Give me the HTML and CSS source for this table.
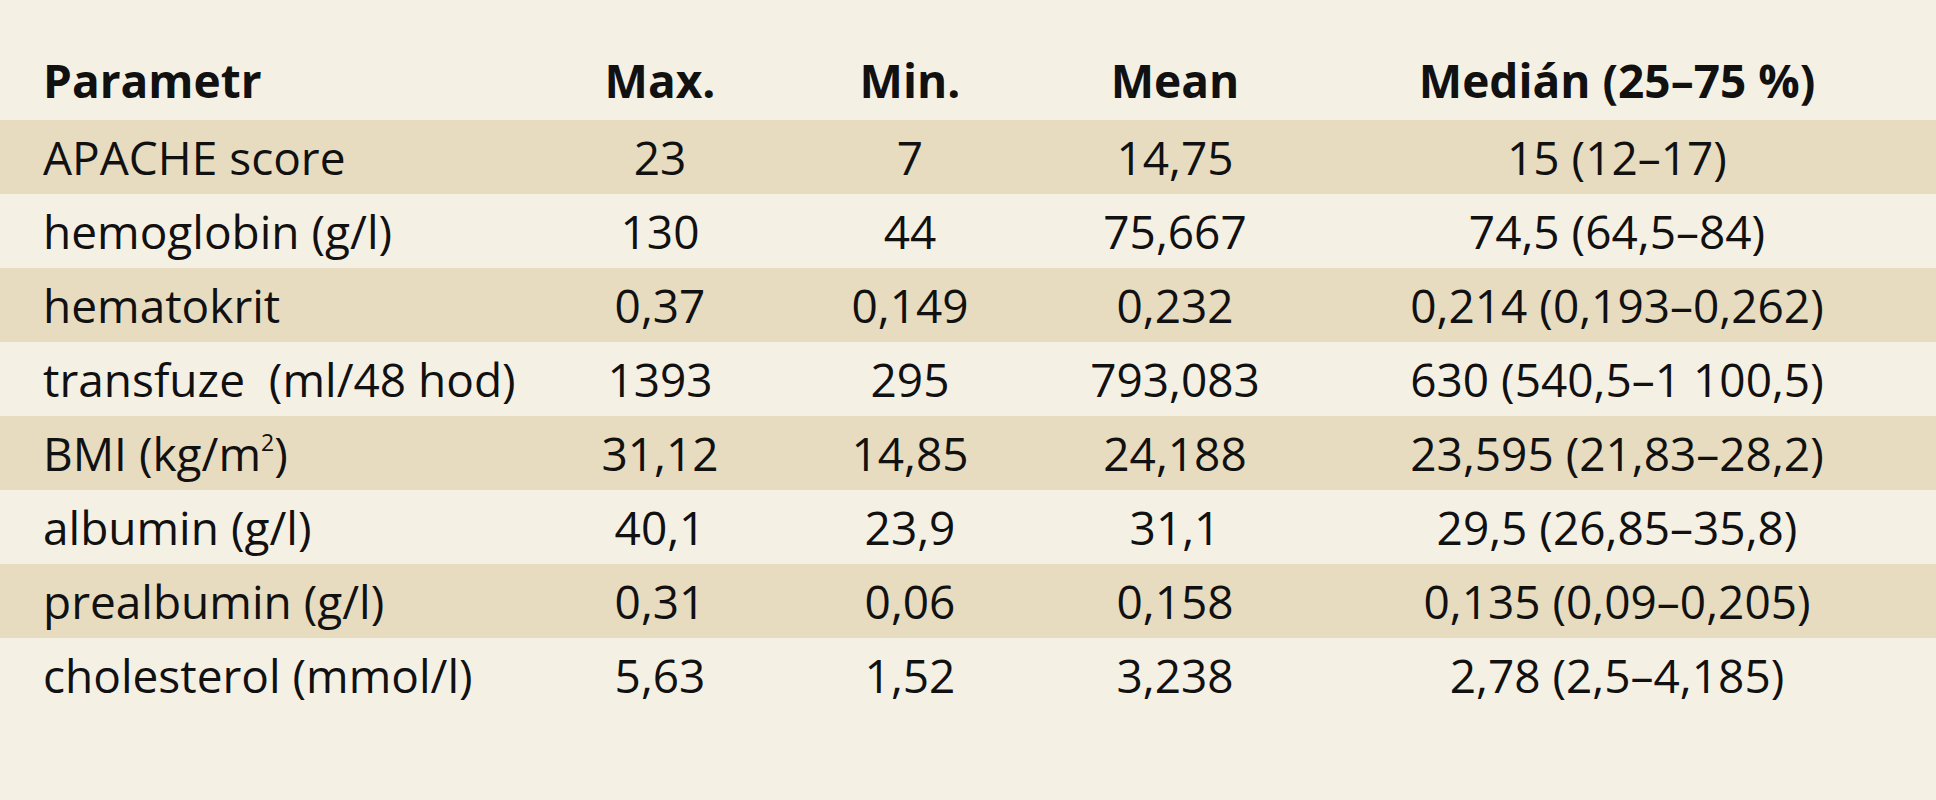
FILE: index.html
```html
<!DOCTYPE html>
<html lang="cs">
<head>
<meta charset="utf-8">
<link rel="stylesheet" href="styles.css">
</head>
<body>
<div class="table">
  <div class="row head">
    <div class="c first">Parametr</div>
    <div class="c">Max.</div>
    <div class="c">Min.</div>
    <div class="c">Mean</div>
    <div class="c">Medián (25–75 %)</div>
  </div>
  <div class="row band">
    <div class="c first">APACHE score</div>
    <div class="c">23</div><div class="c">7</div><div class="c">14,75</div><div class="c">15 (12–17)</div>
  </div>
  <div class="row">
    <div class="c first">hemoglobin (g/l)</div>
    <div class="c">130</div><div class="c">44</div><div class="c">75,667</div><div class="c">74,5 (64,5–84)</div>
  </div>
  <div class="row band">
    <div class="c first">hematokrit</div>
    <div class="c">0,37</div><div class="c">0,149</div><div class="c">0,232</div><div class="c">0,214 (0,193–0,262)</div>
  </div>
  <div class="row">
    <div class="c first">transfuze&nbsp; (ml/48 hod)</div>
    <div class="c">1393</div><div class="c">295</div><div class="c">793,083</div><div class="c">630 (540,5–1 100,5)</div>
  </div>
  <div class="row band">
    <div class="c first">BMI (kg/m<sup>2</sup>)</div>
    <div class="c">31,12</div><div class="c">14,85</div><div class="c">24,188</div><div class="c">23,595 (21,83–28,2)</div>
  </div>
  <div class="row">
    <div class="c first">albumin (g/l)</div>
    <div class="c">40,1</div><div class="c">23,9</div><div class="c">31,1</div><div class="c">29,5 (26,85–35,8)</div>
  </div>
  <div class="row band">
    <div class="c first">prealbumin (g/l)</div>
    <div class="c">0,31</div><div class="c">0,06</div><div class="c">0,158</div><div class="c">0,135 (0,09–0,205)</div>
  </div>
  <div class="row">
    <div class="c first">cholesterol (mmol/l)</div>
    <div class="c">5,63</div><div class="c">1,52</div><div class="c">3,238</div><div class="c">2,78 (2,5–4,185)</div>
  </div>
</div>
</body>
</html>
```
FILE: styles.css
```css
html, body {
  margin: 0;
  padding: 0;
  background: #f5f0e4;
}
body {
  width: 1936px;
  height: 800px;
  font-family: "Open Sans", "Noto Sans", sans-serif;
  color: #111;
  font-size: 46px;
}
.table {
  display: flex;
  flex-direction: column;
}
.row {
  display: grid;
  grid-template-columns: 552px 216px 284px 246px 1fr;
  height: 74px;
  align-items: center;
}
.row.head {
  height: 120px;
  align-items: start;
  font-weight: 700;
}
.row.head .c {
  padding-top: 56px;
  line-height: 48px;
}
.band {
  background: #e7dcc0;
}
.c {
  text-align: center;
  white-space: nowrap;
  line-height: 48px;
}
.c.first {
  text-align: left;
  padding-left: 43px;
}
sup {
  font-size: 0.5em;
  line-height: 0;
  vertical-align: 0.85em;
}
```
